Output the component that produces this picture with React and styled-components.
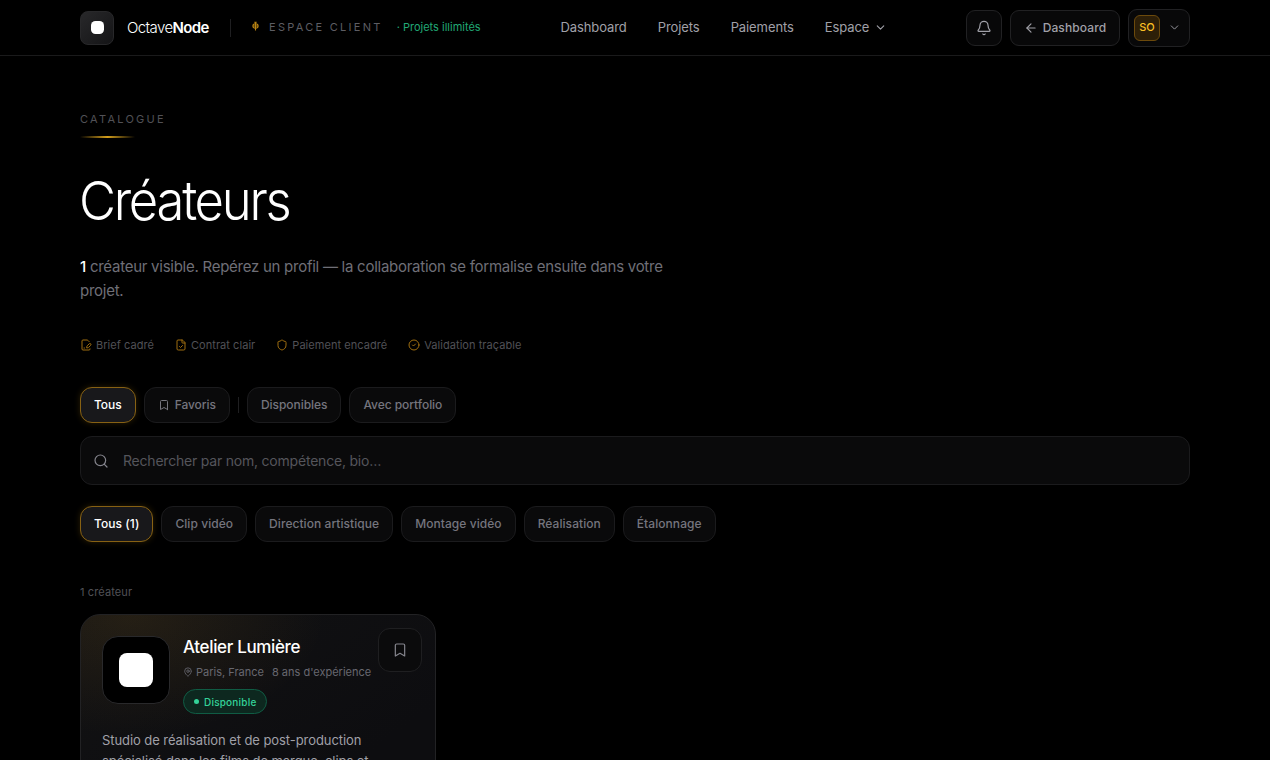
import styled, { createGlobalStyle, css } from 'styled-components';
import { ArrowLeft, Bell, Bookmark, ChevronDown, CircleCheck, FileCheck, FilePenLine, MapPin, Search, Shield } from 'lucide-react';

const GlobalStyle = createGlobalStyle`
  * { box-sizing: border-box; }
  html, body { margin: 0; background: #000; }
  body {
    height: 760px;
    overflow: hidden;
    font-family: Inter, "Liberation Sans", sans-serif;
    color: #fff;
  }
  button, input { font-family: inherit; }
  svg { flex: none; }
`;

const Header = styled.header`
  height: 56px;
  padding: 0 80px;
  display: flex;
  align-items: center;
  border-bottom: 1px solid #1a1a1b;
`;

const Logo = styled.div`
  width: 34px;
  height: 34px;
  border-radius: 8px;
  border: 1px solid #28282a;
  background: linear-gradient(135deg, #28282a, #141416);
  display: flex;
  align-items: center;
  justify-content: center;
  &::after {
    content: '';
    width: 13px;
    height: 13px;
    border-radius: 4.5px;
    background: #fff;
  }
`;

const Brand = styled.div`
  margin-left: 13px;
  width: 83px;
  font-size: 15px;
  font-weight: 300;
  letter-spacing: -0.6px;
  white-space: nowrap;
  b { font-weight: 600; }
`;

const Divider = styled.span`
  width: 1px;
  height: ${p => p.$h}px;
  background: #1f1f21;
  margin: ${p => p.$m || '0'};
`;

const Space = styled.div`
  display: flex;
  align-items: center;
  width: 309.5px;
  padding-bottom: 1px;
  white-space: nowrap;
  font-size: 11px;
  letter-spacing: 2.28px;
  color: #5d5d63;
  svg { margin: -2px 9px 0 0; }
`;

const Unlimited = styled.span`
  margin-left: 14px;
  letter-spacing: 0;
  color: #21a875;
`;

const Nav = styled.nav`
  display: flex;
  gap: 31px;
  padding-bottom: 1px;
  font-size: 13px;
  letter-spacing: -0.09px;
  color: #a0a0a8;
  span {
    display: flex;
    align-items: center;
    gap: 5px;
  }
`;

const Actions = styled.div`
  margin-left: auto;
  display: flex;
  align-items: center;
  gap: 8px;
`;

const HeaderButton = styled.button`
  height: 36px;
  width: ${p => p.$w}px;
  padding: 0;
  display: flex;
  align-items: center;
  justify-content: center;
  gap: 5px;
  border: 1px solid #212123;
  border-radius: 9px;
  background: #080809;
  color: #a0a0a8;
  font-size: 12px;
  font-weight: 500;
  letter-spacing: 0.12px;
`;

const UserButton = styled(HeaderButton)`
  height: 38px;
  padding-left: 5px;
  justify-content: flex-start;
  gap: 8px;
`;

const Initials = styled.span`
  width: 26px;
  height: 26px;
  padding-bottom: 1px;
  display: flex;
  align-items: center;
  justify-content: center;
  border-radius: 6px;
  border: 1px solid #6c4a0c;
  background: #2d1f08;
  color: #fbbf24;
  font-size: 11px;
  font-weight: 500;
  letter-spacing: 0;
`;

const Page = styled.main`
  height: 704px;
  padding: 56px 80px 0;
  overflow: hidden;
`;

const Eyebrow = styled.div`
  font-size: 11px;
  line-height: 15px;
  letter-spacing: 2.25px;
  color: #515156;
  &::after {
    content: '';
    display: block;
    width: 55px;
    height: 2px;
    margin-top: 9px;
    background: linear-gradient(90deg, transparent, #d39e1c, transparent);
  }
`;

const Title = styled.h1`
  margin: 34px 0 0 -1px;
  font-size: 54px;
  line-height: 58px;
  font-weight: 300;
  letter-spacing: -2.4px;
  transform: scaleX(0.94);
  transform-origin: left;
`;

const Lead = styled.p`
  margin: 25px 0 0;
  width: 600px;
  font-size: 15px;
  line-height: 24px;
  color: #6f6f77;
  letter-spacing: -0.26px;
  b { color: #fff; font-weight: 500; }
`;

const Steps = styled.div`
  margin-top: 34px;
  height: 16px;
  display: flex;
  gap: 21px;
`;

const Step = styled.span`
  display: flex;
  align-items: center;
  gap: 4px;
  font-size: 11px;
  letter-spacing: 0.05px;
  color: #515156;
  svg { color: #a06f10; }
`;

const Filters = styled.div`
  display: flex;
  align-items: center;
  gap: 8px;
  margin-top: ${p => p.$top}px;
  letter-spacing: ${p => p.$track}px;
`;

const Chip = styled.button`
  height: 36px;
  padding: 0 13px 1px;
  display: flex;
  align-items: center;
  gap: 5px;
  border: 1px solid #1b1b1d;
  border-radius: 12px;
  background: #0a0a0b;
  color: #75757e;
  font-size: 12px;
  font-weight: 500;
  letter-spacing: inherit;
  white-space: nowrap;
  ${p => p.$active && css`
    border-color: #876113;
    background: #18181b;
    color: #fff;
    box-shadow: 0 0 6px rgba(212, 150, 20, 0.2);
  `}
`;

const SearchBox = styled.label`
  height: 49px;
  margin-top: 13px;
  padding: 0 12px;
  display: flex;
  align-items: center;
  gap: 14px;
  border: 1px solid #1b1b1d;
  border-radius: 12px;
  background: #0a0a0b;
  color: #85858d;
  input {
    flex: 1;
    padding: 0;
    border: 0;
    outline: 0;
    background: none;
    color: #fff;
    font-size: 14px;
    letter-spacing: -0.21px;
  }
  input::placeholder { color: #55555b; }
`;

const Count = styled.div`
  margin: 42px 0 14px;
  font-size: 11px;
  line-height: 16px;
  letter-spacing: 0.11px;
  color: #515156;
`;

const Card = styled.article`
  width: 356px;
  height: 320px;
  padding: 13px 13px 21px 21px;
  border: 1px solid #222224;
  border-radius: 20px;
  background:
    radial-gradient(ellipse 55% 38% at 14% 0, rgba(210, 150, 40, 0.1), transparent),
    linear-gradient(145deg, #121213, #0d0d10 60%);
`;

const CardTop = styled.div`
  display: flex;
  align-items: flex-start;
`;

const Avatar = styled.div`
  flex: none;
  width: 68px;
  height: 68px;
  margin-top: 8px;
  border: 1px solid #29292b;
  border-radius: 16px;
  background: #000;
  display: flex;
  align-items: center;
  justify-content: center;
  &::after {
    content: '';
    width: 34px;
    height: 34px;
    border-radius: 8px;
    background: #fff;
  }
`;

const Info = styled.div`
  flex: 1;
  margin: 8px 0 0 13px;
  white-space: nowrap;
`;

const Name = styled.h2`
  margin: 0;
  font-size: 17px;
  line-height: 23px;
  font-weight: 500;
  letter-spacing: -0.35px;
`;

const Meta = styled.div`
  margin-top: 5px;
  height: 16px;
  display: flex;
  align-items: center;
  gap: 8px;
  font-size: 11px;
  letter-spacing: 0;
  color: #686870;
  span {
    display: flex;
    align-items: center;
    gap: 3px;
  }
`;

const Status = styled.span`
  height: 25px;
  margin-top: 9px;
  padding: 0 10px;
  display: inline-flex;
  align-items: center;
  gap: 5px;
  border: 1px solid #105c44;
  border-radius: 13px;
  background: #0d281f;
  color: #34d399;
  font-size: 10px;
  font-weight: 500;
  letter-spacing: 0.2px;
  &::before {
    content: '';
    width: 5px;
    height: 5px;
    border-radius: 50%;
    background: #34d399;
  }
`;

const SaveButton = styled.button`
  width: 44px;
  height: 44px;
  padding: 0;
  display: flex;
  align-items: center;
  justify-content: center;
  border: 1px solid #1f1f21;
  border-radius: 12px;
  background: #0b0b0c;
  color: #85858d;
`;

const Bio = styled.p`
  margin: 16px 0 0;
  font-size: 13px;
  line-height: 21px;
  color: #a0a0a8;
  letter-spacing: -0.07px;
`;

const steps = [
  [FilePenLine, 'Brief cadré'],
  [FileCheck, 'Contrat clair'],
  [Shield, 'Paiement encadré'],
  [CircleCheck, 'Validation traçable'],
];

const skills = ['Tous (1)', 'Clip vidéo', 'Direction artistique', 'Montage vidéo', 'Réalisation', 'Étalonnage'];

function Emblem() {
  return (
    <svg width="9" height="11" viewBox="0 0 9 11" fill="none" stroke="#b98413" strokeWidth="1.1">
      <ellipse cx="4.5" cy="5" rx="2.6" ry="2.2" />
      <path d="M4.5 1v8.4M3.3 1.3h2.4M2 5h5" />
    </svg>
  );
}

function App() {
  return (
    <>
      <GlobalStyle />
      <Header>
        <Logo />
        <Brand>Octave<b>Node</b></Brand>
        <Divider $h={18} $m="0 20px 0 20px" />
        <Space>
          <Emblem />
          ESPACE CLIENT
          <Unlimited>· Projets illimités</Unlimited>
        </Space>
        <Nav>
          <span>Dashboard</span>
          <span>Projets</span>
          <span>Paiements</span>
          <span>Espace <ChevronDown size={13} /></span>
        </Nav>
        <Actions>
          <HeaderButton $w={36}><Bell size={16} strokeWidth={1.8} /></HeaderButton>
          <HeaderButton $w={110}><ArrowLeft size={14} />Dashboard</HeaderButton>
          <UserButton $w={62}>
            <Initials>SO</Initials>
            <ChevronDown size={13} strokeWidth={1.7} />
          </UserButton>
        </Actions>
      </Header>
      <Page>
        <Eyebrow>CATALOGUE</Eyebrow>
        <Title>Créateurs</Title>
        <Lead><b>1</b> créateur visible. Repérez un profil — la collaboration se formalise ensuite dans votre projet.</Lead>
        <Steps>
          {steps.map(([Icon, label]) => (
            <Step key={label}><Icon size={12} strokeWidth={2} />{label}</Step>
          ))}
        </Steps>
        <Filters $top={34} $track={-0.05}>
          <Chip $active>Tous</Chip>
          <Chip><Bookmark size={12} />Favoris</Chip>
          <Divider $h={16} />
          <Chip>Disponibles</Chip>
          <Chip>Avec portfolio</Chip>
        </Filters>
        <SearchBox>
          <Search size={16} strokeWidth={1.8} />
          <input placeholder="Rechercher par nom, compétence, bio…" />
        </SearchBox>
        <Filters $top={21} $track={0.06}>
          {skills.map((skill, i) => <Chip key={skill} $active={i === 0}>{skill}</Chip>)}
        </Filters>
        <Count>1 créateur</Count>
        <Card>
          <CardTop>
            <Avatar />
            <Info>
              <Name>Atelier Lumière</Name>
              <Meta><span><MapPin size={10} />Paris, France</span><span>8 ans d'expérience</span></Meta>
              <Status>Disponible</Status>
            </Info>
            <SaveButton><Bookmark size={16} strokeWidth={1.8} /></SaveButton>
          </CardTop>
          <Bio>Studio de réalisation et de post-production<br />spécialisé dans les films de marque, clips et</Bio>
        </Card>
      </Page>
    </>
  );
}

export default App;
